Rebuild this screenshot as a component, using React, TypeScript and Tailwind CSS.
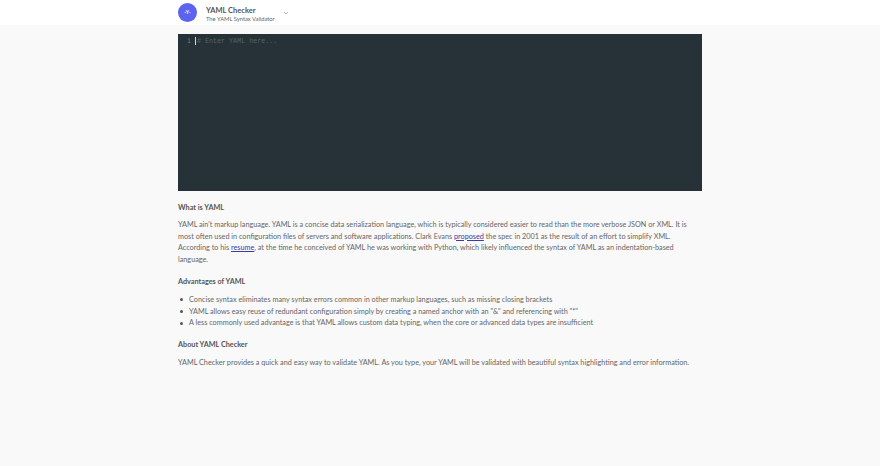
import React from "react";

const Heading = ({ children }: { children: React.ReactNode }) => (
  <h2 className="text-[7.25px] leading-[12px] font-bold text-[#555]">{children}</h2>
);

const A = ({ children }: { children: React.ReactNode }) => (
  <a href="#" className="text-[#3a3aa8] underline">{children}</a>
);

const Item = ({ children }: { children: React.ReactNode }) => (
  <li className="flex items-center">
    <span className="ml-[2px] mr-[6px] w-[3px] h-[3px] rounded-full bg-[#555]" />
    <span>{children}</span>
  </li>
);

const App = () => {
  return (
    <div className="min-h-[466px] bg-[#f9f9f9] font-['Lato','Noto_Sans',sans-serif] text-[#666]">
      <header className="h-[25px] bg-white">
        <div className="w-[524px] ml-[178px] h-[25px] flex items-center">
          <div className="w-[19px] h-[19px] rounded-full bg-[#5b63f0] text-white text-[5px] font-bold flex items-center justify-center">
            ·Y·
          </div>
          <div className="ml-[9px] flex flex-col pt-[2px]">
            <div className="text-[7.5px] leading-[9px] font-bold text-[#555]">YAML Checker</div>
            <div className="text-[5.8px] leading-[7px] text-[#666]">The YAML Syntax Validator</div>
          </div>
          <svg className="ml-[8px] mt-[1px]" width="6" height="4" viewBox="0 0 6 4">
            <path d="M1 1l2 2 2-2" fill="none" stroke="#bbb" strokeWidth="1" />
          </svg>
        </div>
      </header>

      <main className="w-[524px] ml-[178px] pt-[9px]">
        <div className="h-[157px] bg-[#263238] flex items-start pt-[3px] font-['Liberation_Mono',monospace] text-[6.7px] leading-[8px]">
          <div className="w-[13px] text-right text-[#6b7a80]">1</div>
          <div className="ml-[4px] w-px h-[8px] bg-[#cfd8dc]" />
          <div className="ml-px text-[#55646b]"># Enter YAML here...</div>
        </div>

        <div className="pt-[11px] text-[7.25px] leading-[11.7px]">
          <Heading>What is YAML</Heading>
          <p className="mt-[5px]">
            YAML ain't markup language. YAML is a concise data serialization language, which is typically considered easier to read than the more verbose JSON or XML. It is most often used in configuration files of servers and software applications. Clark Evans <A>proposed</A> the spec in 2001 as the result of an effort to simplify XML. According to his <A>resume</A>, at the time he conceived of YAML he was working with Python, which likely influenced the syntax of YAML as an indentation-based language.
          </p>

          <div className="mt-[10px]">
            <Heading>Advantages of YAML</Heading>
          </div>
          <ul className="mt-[6px]">
            <Item>Concise syntax eliminates many syntax errors common in other markup languages, such as missing closing brackets</Item>
            <Item>YAML allows easy reuse of redundant configuration simply by creating a named anchor with an "&amp;" and referencing with "*"</Item>
            <Item>A less commonly used advantage is that YAML allows custom data typing, when the core or advanced data types are insufficient</Item>
          </ul>

          <div className="mt-[10px]">
            <Heading>About YAML Checker</Heading>
          </div>
          <p className="mt-[6px]">
            YAML Checker provides a quick and easy way to validate YAML. As you type, your YAML will be validated with beautiful syntax highlighting and error information.
          </p>
        </div>
      </main>
    </div>
  );
};

export default App;
